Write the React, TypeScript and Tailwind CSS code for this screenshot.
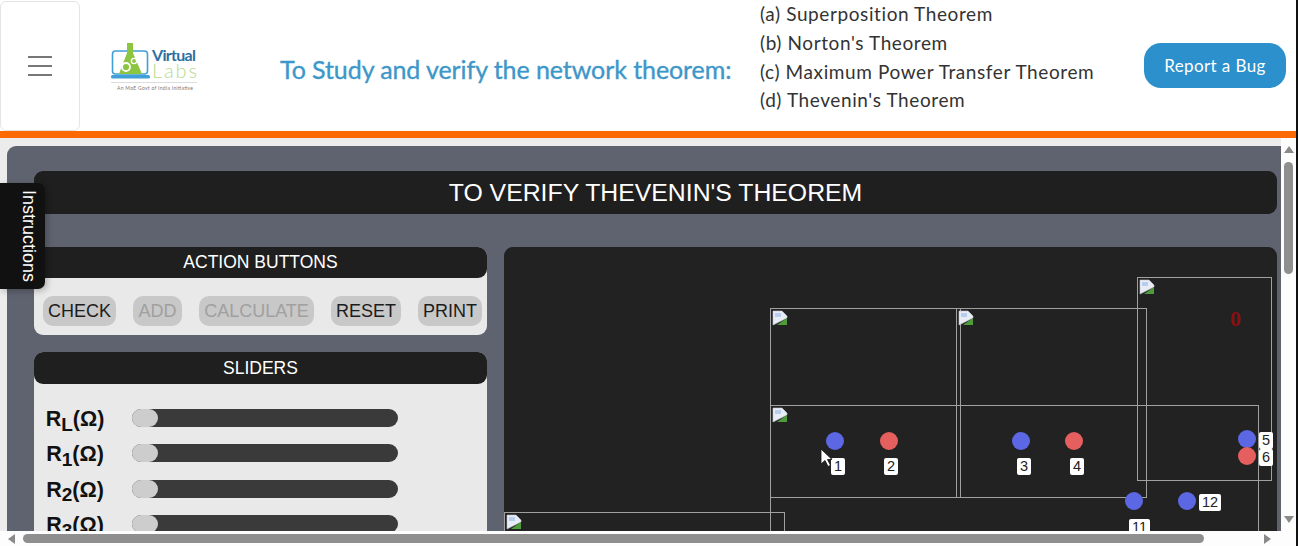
const theorems = [
  "(a) Superposition Theorem",
  "(b) Norton's Theorem",
  "(c) Maximum Power Transfer Theorem",
  "(d) Thevenin's Theorem",
];

const actions = [
  { label: "CHECK", off: false, width: "w-[73px]" },
  { label: "ADD", off: true, width: "w-[49px]" },
  { label: "CALCULATE", off: true, width: "w-[115px]" },
  { label: "RESET", off: false, width: "w-[70px]" },
  { label: "PRINT", off: false, width: "w-[64px]" },
];

const sliders = ["L", "1", "2", "3"];

// boxes on the circuit canvas, offsets measured from the canvas corner
const frames = [
  { left: 633, top: 30, width: 135, height: 204 },
  { left: 266, top: 61, width: 191, height: 190 },
  { left: 452, top: 61, width: 191, height: 190 },
  { left: 266, top: 158, width: 489, height: 200 },
  { left: 0, top: 265, width: 281, height: 100 },
];

const dots = [
  { left: 322, top: 185, color: "#5b67e3" },
  { left: 376, top: 185, color: "#e65f5f" },
  { left: 508, top: 185, color: "#5b67e3" },
  { left: 561, top: 185, color: "#e65f5f" },
  { left: 734, top: 183, color: "#5b67e3" },
  { left: 734, top: 200, color: "#e65f5f" },
  { left: 621, top: 245, color: "#5b67e3" },
  { left: 674, top: 245, color: "#5b67e3" },
];

const tags = [
  { left: 327, top: 211, text: "1" },
  { left: 380, top: 211, text: "2" },
  { left: 513, top: 211, text: "3" },
  { left: 566, top: 211, text: "4" },
  { left: 755, top: 185, text: "5" },
  { left: 755, top: 202, text: "6" },
  { left: 695, top: 247, text: "12" },
  { left: 625, top: 272, text: "11" },
];

function BrokenImage() {
  return (
    <svg width="16" height="16" viewBox="0 0 16 16" className="absolute left-[1px] top-[1px]">
      <path d="M1 1h9l5 5v2L1 15z" fill="#e8ecf4" stroke="#c4c8d0" strokeWidth="0.6" />
      <path d="M3 3h6v4H3z" fill="#b6cdf0" />
      <path d="M5 15l10-7v7z" fill="#4f9d3a" />
    </svg>
  );
}

function Logo() {
  return (
    <svg width="90" height="52" viewBox="0 0 90 52">
      <rect x="1.5" y="10" width="35" height="23" rx="3" fill="none" stroke="#3f9fd6" strokeWidth="1.6" />
      <rect x="0" y="34" width="39" height="3.5" rx="1.5" fill="#3f9fd6" />
      <path d="M16 2h6v10l9 21H8l8-21z" fill="#8cc540" />
      <circle cx="15" cy="26" r="4" fill="none" stroke="#ffffff" strokeWidth="1.8" />
      <circle cx="23" cy="20" r="2.6" fill="none" stroke="#ffffff" strokeWidth="1.4" />
      <text x="41" y="20" fontSize="16" fontWeight="700" fill="#2f6f9f" fontFamily="Lato, sans-serif" textLength="44">
        Virtual
      </text>
      <text x="41" y="37" fontSize="20" fontWeight="300" fill="#b7d98c" fontFamily="Lato, sans-serif" textLength="45">
        Labs
      </text>
      <rect x="0" y="41" width="86" height="0.7" fill="#cfcfcf" />
      <text x="6" y="49" fontSize="5" fill="#777777" fontFamily="Lato, sans-serif" textLength="76">
        An MoE Govt of India Initiative
      </text>
    </svg>
  );
}

function Header() {
  return (
    <header className="flex h-[131px] shrink-0 items-center bg-white font-['Lato',sans-serif]">
      <div className="flex h-[130px] w-[80px] shrink-0 flex-col items-center justify-center gap-[7px] rounded-md border border-[#e4e4e4]">
        <span className="h-[2px] w-[24px] bg-[#777777]" />
        <span className="h-[2px] w-[24px] bg-[#777777]" />
        <span className="h-[2px] w-[24px] bg-[#777777]" />
      </div>
      <div className="ml-[31px] mt-[2px] shrink-0">
        <Logo />
      </div>
      <h1 className="ml-[79px] mt-[8px] w-[460px] shrink-0 text-[25px] font-normal tracking-[-0.08px] whitespace-nowrap text-[#3d97c9] [-webkit-text-stroke:0.35px_#3d97c9]">
        To Study and verify the network theorem:
      </h1>
      <ul className="ml-[20px] -mt-[16px] w-[384px] shrink-0 text-[19px] leading-[28.7px] tracking-[0.6px] whitespace-nowrap text-[#333333]">
        {theorems.map((item) => (
          <li key={item}>{item}</li>
        ))}
      </ul>
      <button className="h-[45px] w-[142px] shrink-0 rounded-[17px] bg-[#2b90cb] text-[17px] tracking-[0.4px] text-white">
        Report a Bug
      </button>
    </header>
  );
}

function SectionTitle({ text, className }: { text: string; className: string }) {
  return (
    <div className={`flex items-center justify-center rounded-[9px] bg-[#1f1f1f] text-[17.5px] text-white ${className}`}>
      {text}
    </div>
  );
}

function LeftColumn() {
  return (
    <div className="flex w-[453px] shrink-0 flex-col gap-[17px]">
      <div className="rounded-[9px] bg-[#e9e9e9]">
        <SectionTitle text="ACTION BUTTONS" className="h-[31px]" />
        <div className="flex h-[57px] items-start justify-between pl-[9px] pr-[5px] pt-[18px]">
          {actions.map((item) => (
            <button
              key={item.label}
              className={`h-[30px] rounded-[10px] bg-[#c8c8c8] text-[18px] ${item.width} ${item.off ? "text-[#a0a0a0]" : "text-[#1c1c1c]"}`}
            >
              {item.label}
            </button>
          ))}
        </div>
      </div>
      <div className="h-[300px] rounded-t-[9px] bg-[#e9e9e9]">
        <SectionTitle text="SLIDERS" className="h-[32px]" />
        <div className="flex flex-col gap-[17.4px] pt-[25px]">
          {sliders.map((sub) => (
            <div key={sub} className="flex h-[18px] items-center">
              <div className="ml-[1px] mr-[17px] mt-[2px] w-[80px] text-center text-[21.5px] font-bold whitespace-nowrap text-[#111111]">
                R<sub className="text-[19px]">{sub}</sub>(Ω)
              </div>
              <div className="h-[18px] w-[266px] rounded-full bg-[#3a3a3a]">
                <div className="h-[18px] w-[26px] rounded-full bg-[#cdcdcd]" />
              </div>
            </div>
          ))}
        </div>
      </div>
    </div>
  );
}

function Canvas() {
  return (
    <div className="relative h-[400px] min-w-0 flex-1 rounded-t-[9px] bg-[#222222] font-['Liberation_Sans',Arial,sans-serif]">
      {frames.map((f, i) => (
        <div
          key={i}
          className="absolute border border-[#a0a0a0]"
          style={{ left: f.left, top: f.top, width: f.width, height: f.height }}
        >
          <BrokenImage />
        </div>
      ))}
      <span className="absolute left-[726px] top-[55px] font-['Liberation_Serif',serif] text-[22px] font-bold text-[#8a1010]">
        0
      </span>
      {dots.map((d, i) => (
        <span
          key={i}
          className="absolute h-[18px] w-[18px] rounded-full"
          style={{ left: d.left, top: d.top, backgroundColor: d.color }}
        />
      ))}
      {tags.map((t) => (
        <span
          key={t.text}
          className="absolute flex h-[17px] items-center justify-center rounded-[2px] bg-white px-[3px] text-[14.5px] text-[#222222]"
          style={{ left: t.left, top: t.top }}
        >
          {t.text}
        </span>
      ))}
      <svg width="14" height="20" viewBox="0 0 14 20" className="absolute left-[316px] top-[201px]">
        <path d="M1 1v15l4-3.5 3 6 2.5-1.2-3-5.8H12z" fill="#ffffff" stroke="#111111" strokeWidth="0.8" />
      </svg>
    </div>
  );
}

function VerticalBar() {
  return (
    <div className="flex w-[15px] shrink-0 flex-col items-center bg-[#fdfdfd] pt-[8px]">
      <span className="h-0 w-0 border-x-[5px] border-b-[7px] border-x-transparent border-b-[#8a8a8a]" />
      <span className="mt-[9px] h-[112px] w-[9px] rounded-full bg-[#8f8f8f]" />
      <span className="mb-[8px] mt-auto h-0 w-0 border-x-[5px] border-t-[7px] border-x-transparent border-t-[#8a8a8a]" />
    </div>
  );
}

function HorizontalBar() {
  return (
    <div className="flex h-[15px] shrink-0 items-center bg-[#fdfdfd] pl-[8px] pr-[25px]">
      <span className="h-0 w-0 border-y-[5px] border-r-[7px] border-y-transparent border-r-[#8a8a8a]" />
      <span className="ml-[8px] h-[9px] w-[1181px] rounded-full bg-[#8f8f8f]" />
      <span className="ml-auto h-0 w-0 border-y-[5px] border-l-[7px] border-y-transparent border-l-[#8a8a8a]" />
    </div>
  );
}

export default function App() {
  return (
    <div className="relative flex h-[546px] w-[1298px] overflow-hidden bg-white">
      <div className="flex min-w-0 flex-1 flex-col">
        <Header />
        <div className="h-[7px] shrink-0 bg-[#fb6a05]" />
        <div className="flex min-h-0 flex-1">
          <div className="min-w-0 flex-1 overflow-hidden bg-[#ececec] pl-[7px] pt-[8px]">
            <main className="h-[500px] rounded-tl-[9px] bg-[#5f6370] pl-[27px] pr-[4px] pt-[25px] font-['Liberation_Sans',Arial,sans-serif]">
              <div className="flex h-[43px] items-center justify-center rounded-[9px] bg-[#1f1f1f] text-[24.8px] text-white">
                TO VERIFY THEVENIN'S THEOREM
              </div>
              <div className="mt-[33px] flex gap-[17px]">
                <LeftColumn />
                <Canvas />
              </div>
            </main>
          </div>
          <VerticalBar />
        </div>
        <HorizontalBar />
      </div>
      <div className="w-[2px] shrink-0 bg-[#111111]" />
      <div className="absolute left-0 top-[183px] flex h-[106px] w-[45px] items-center justify-center rounded-r-[7px] bg-[#111111] pl-[12px] font-['Liberation_Sans',Arial,sans-serif] text-[18px] text-white shadow-[2px_2px_6px_rgba(0,0,0,0.25)] [writing-mode:vertical-rl]">
        Instructions
      </div>
    </div>
  );
}
